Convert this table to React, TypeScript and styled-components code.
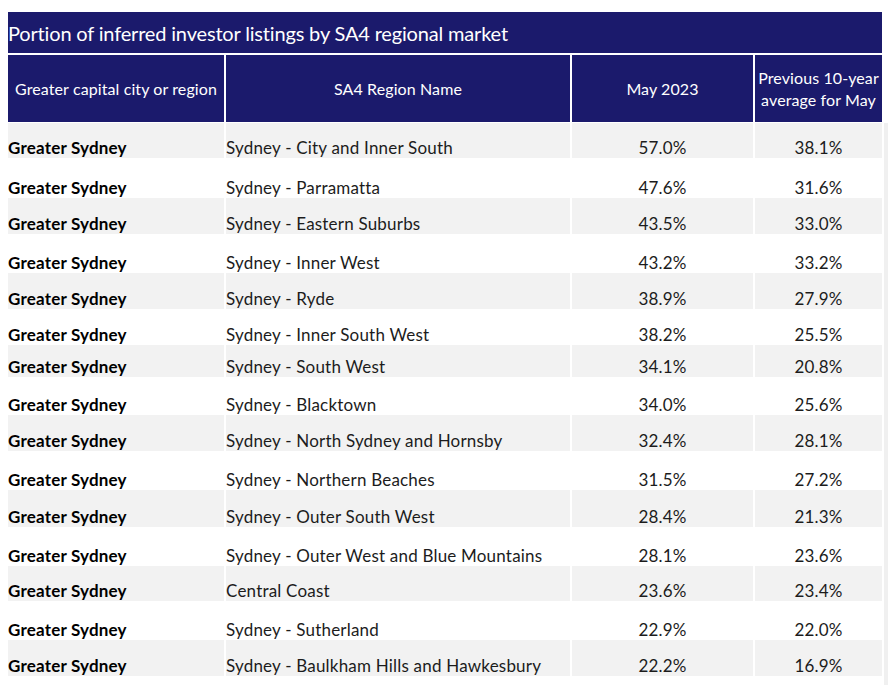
import React from "react";
import styled, { createGlobalStyle } from "styled-components";

const Global = createGlobalStyle`
  html, body { margin: 0; padding: 0; background: #ffffff; }
  body { font-family: Lato, "Liberation Sans", sans-serif; }
`;

const NAVY = "#1b1a6c";
const COLS = "216px 344px 181px 127px";

const Page = styled.div`
  padding: 12px 0 0 8px;
  width: 874px;
`;

const Title = styled.div`
  background: ${NAVY};
  color: #ffffff;
  height: 41px;
  display: flex;
  align-items: center;
  font-size: 20px;
  letter-spacing: -0.17px;
  margin-bottom: 2px;
`;

const HeaderRow = styled.div`
  display: grid;
  grid-template-columns: ${COLS};
  column-gap: 2px;
  height: 67px;
  margin-bottom: 1px;
`;

const HeadCell = styled.div`
  background: ${NAVY};
  color: #ffffff;
  font-size: 16px;
  line-height: 22px;
  display: flex;
  align-items: center;
  justify-content: center;
  text-align: center;
  letter-spacing: 0.1px;
`;

const Row = styled.div<{ $h: number; $shade: boolean }>`
  display: grid;
  grid-template-columns: ${COLS};
  column-gap: 2px;
  height: ${(p) => p.$h}px;
  & > div {
    background: ${(p) => (p.$shade ? "#f2f2f2" : "#ffffff")};
  }
`;

const Cell = styled.div<{ $align?: "left" | "center"; $bold?: boolean }>`
  display: flex;
  align-items: flex-end;
  justify-content: ${(p) => (p.$align === "center" ? "center" : "flex-start")};
  padding-bottom: 0;
  font-size: 17px;
  line-height: 20px;
  color: ${(p) => (p.$bold ? "#000000" : "#1c1c1c")};
  font-weight: ${(p) => (p.$bold ? 700 : 400)};
  letter-spacing: 0.2px;
  white-space: nowrap;
`;

const Scroll = styled.div`
  position: fixed;
  top: 123px;
  bottom: 0;
  left: 884px;
  width: 4px;
  background: #f0f0f0;
`;

const rows: [string, string, string, number][] = [
  ["Sydney - City and Inner South", "57.0%", "38.1%", 35],
  ["Sydney - Parramatta", "47.6%", "31.6%", 40],
  ["Sydney - Eastern Suburbs", "43.5%", "33.0%", 36],
  ["Sydney - Inner West", "43.2%", "33.2%", 39],
  ["Sydney - Ryde", "38.9%", "27.9%", 36],
  ["Sydney - Inner South West", "38.2%", "25.5%", 36],
  ["Sydney - South West", "34.1%", "20.8%", 32],
  ["Sydney - Blacktown", "34.0%", "25.6%", 38],
  ["Sydney - North Sydney and Hornsby", "32.4%", "28.1%", 36],
  ["Sydney - Northern Beaches", "31.5%", "27.2%", 39],
  ["Sydney - Outer South West", "28.4%", "21.3%", 37],
  ["Sydney - Outer West and Blue Mountains", "28.1%", "23.6%", 39],
  ["Central Coast", "23.6%", "23.4%", 35],
  ["Sydney - Sutherland", "22.9%", "22.0%", 39],
  ["Sydney - Baulkham Hills and Hawkesbury", "22.2%", "16.9%", 36],
];

export default function App() {
  return (
    <>
      <Global />
      <Page>
        <Title>Portion of inferred investor listings by SA4 regional market</Title>
        <HeaderRow>
          <HeadCell>Greater capital city or region</HeadCell>
          <HeadCell>SA4 Region Name</HeadCell>
          <HeadCell>May 2023</HeadCell>
          <HeadCell>
            Previous 10-year
            <br />
            average for May
          </HeadCell>
        </HeaderRow>
        {rows.map(([name, may, avg, h], i) => (
          <Row key={name} $h={h} $shade={i % 2 === 0}>
            <Cell $bold>Greater Sydney</Cell>
            <Cell>{name}</Cell>
            <Cell $align="center">{may}</Cell>
            <Cell $align="center">{avg}</Cell>
          </Row>
        ))}
      </Page>
      <Scroll />
    </>
  );
}
